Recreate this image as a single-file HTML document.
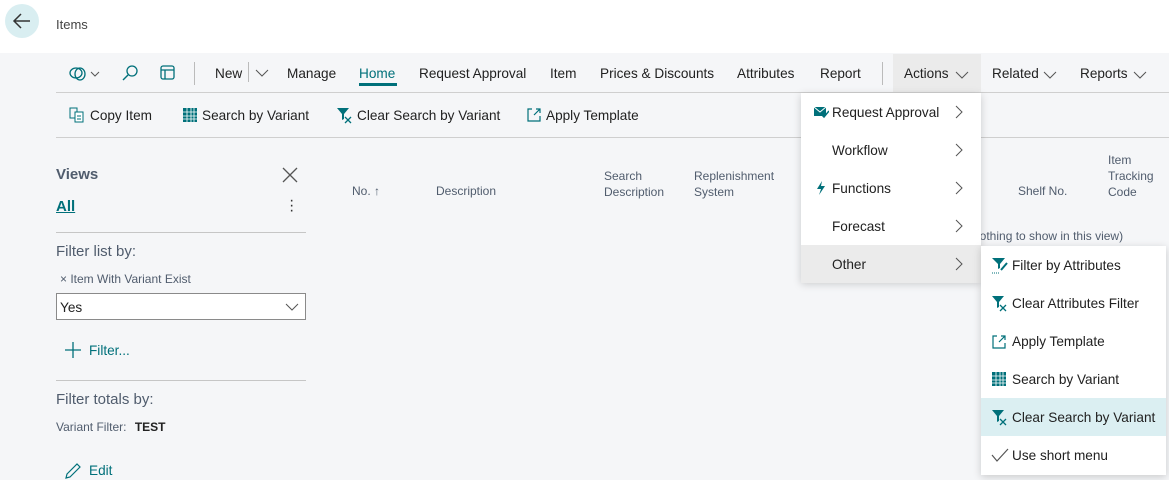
<!DOCTYPE html>
<html><head><meta charset="utf-8"><style>
*{box-sizing:border-box;margin:0;padding:0}
body{width:1169px;height:479px;overflow:hidden;background:#f5f6f8;font-family:"Liberation Sans",sans-serif;color:#212121;position:relative}
.a{position:absolute;white-space:nowrap}
.t{font-size:13.6px}
.teal{color:#00707a}
.menu{position:absolute;background:#fff;box-shadow:0 2px 8px rgba(0,0,0,.18)}
.mi{height:38px;display:flex;align-items:center;font-size:13.6px;position:relative}
.chev{position:absolute;right:18px;top:12px}
svg{display:block}
</style></head><body>
<div class="a" style="left:0;top:0;width:1169px;height:53px;background:#fff"></div>
<div class="a" style="left:5px;top:4px;width:34px;height:34px;border-radius:50%;background:#d9eef1"></div>
<svg class="a" style="left:12px;top:12px" width="20" height="18"><path d="M18 9H2M9 2L2 9l7 7" stroke="#333" stroke-width="1.5" fill="none"/></svg>
<div class="a" style="left:56px;top:17px;font-size:13px;color:#444">Items</div>

<svg class="a" style="left:68px;top:65px" width="34" height="18"><ellipse cx="8" cy="8" rx="6" ry="5" stroke="#00707a" fill="none" stroke-width="1.3"/><ellipse cx="12" cy="9" rx="5" ry="6" stroke="#00707a" fill="none" stroke-width="1.3"/><path d="M23 7l4 4 4-4" stroke="#555" fill="none"/></svg>
<svg class="a" style="left:121px;top:64px" width="18" height="18"><circle cx="11" cy="7" r="5" stroke="#00707a" fill="none" stroke-width="1.3"/><path d="M7 11L2 16" stroke="#00707a" stroke-width="1.4"/></svg>
<svg class="a" style="left:159px;top:64px" width="18" height="18"><rect x="2" y="2" width="13" height="13" rx="2" stroke="#00707a" fill="none" stroke-width="1.3"/><path d="M2 6h13M6 6v9" stroke="#00707a" stroke-width="1.3"/></svg>
<div class="a" style="left:194px;top:62px;width:1px;height:23px;background:#bbb"></div>
<div class="a t" style="left:215px;top:66px">New</div>
<div class="a" style="left:248px;top:62px;width:1px;height:20px;background:#bbb"></div>
<svg class="a" style="left:255px;top:68px" width="14" height="10"><path d="M1 2l6 6 6-6" stroke="#555" fill="none"/></svg>
<div class="a t" style="left:287px;top:66px">Manage</div>
<div class="a t teal" style="left:359px;top:66px">Home</div>
<div class="a" style="left:359px;top:83px;width:38px;height:3px;background:#00707a"></div>
<div class="a t" style="left:419px;top:66px">Request Approval</div>
<div class="a t" style="left:550px;top:66px">Item</div>
<div class="a t" style="left:600px;top:66px">Prices &amp; Discounts</div>
<div class="a t" style="left:737px;top:66px">Attributes</div>
<div class="a t" style="left:820px;top:66px">Report</div>
<div class="a" style="left:882px;top:62px;width:1px;height:23px;background:#bbb"></div>
<div class="a" style="left:893px;top:54px;width:88px;height:39px;background:#ebebeb"></div>
<div class="a t" style="left:904px;top:66px">Actions</div>
<svg class="a" style="left:955px;top:70px" width="14" height="10"><path d="M1 2l6 6 6-6" stroke="#555" fill="none"/></svg>
<div class="a t" style="left:992px;top:66px">Related</div>
<svg class="a" style="left:1043px;top:70px" width="14" height="10"><path d="M1 2l6 6 6-6" stroke="#555" fill="none"/></svg>
<div class="a t" style="left:1080px;top:66px">Reports</div>
<svg class="a" style="left:1133px;top:70px" width="14" height="10"><path d="M1 2l6 6 6-6" stroke="#555" fill="none"/></svg>
<div class="a" style="left:56px;top:92px;width:1113px;height:1px;background:#cfcfcf"></div>

<svg class="a" style="left:69px;top:107px" width="16" height="16"><rect x="1" y="1" width="7" height="10" stroke="#00707a" fill="none"/><rect x="6" y="5" width="8" height="10" stroke="#00707a" fill="#fff"/><path d="M8 9h4M8 12h4" stroke="#00707a"/></svg>
<div class="a t" style="left:90px;top:108px">Copy Item</div>
<svg class="a" style="left:182px;top:107px" width="17" height="16"><rect x="1" y="1" width="14" height="14" fill="#00707a"/><path d="M1 5h14M1 9h14M1 12h14M5 1v14M9 1v14M12 1v14" stroke="#fff" stroke-width=".8"/></svg>
<div class="a t" style="left:202px;top:108px">Search by Variant</div>
<svg class="a" style="left:336px;top:107px" width="17" height="17"><path d="M1 1h12L8 7v5L6 13V7z" fill="#00707a"/><path d="M9 10l6 6M15 10l-6 6" stroke="#00707a" stroke-width="1.3"/></svg>
<div class="a t" style="left:357px;top:108px">Clear Search by Variant</div>
<svg class="a" style="left:526px;top:106px" width="17" height="17"><path d="M6 3H2v12h12v-5" stroke="#00707a" fill="none" stroke-width="1.2"/><path d="M8 9l6-6M10 3h4v4" stroke="#00707a" fill="none" stroke-width="1.2"/></svg>
<div class="a t" style="left:546px;top:108px">Apply Template</div>
<div class="a" style="left:56px;top:137px;width:1113px;height:1px;background:#cfcfcf"></div>

<div class="a" style="left:56px;top:166px;font-size:15px;font-weight:bold;color:#505c6d">Views</div>
<svg class="a" style="left:281px;top:166px" width="18" height="18"><path d="M2 2l14 14M16 2L2 16" stroke="#555" stroke-width="1.3"/></svg>
<div class="a" style="left:56px;top:198px;font-size:15px;font-weight:bold;color:#00707a;text-decoration:underline">All</div>
<div class="a" style="left:289px;top:198px;font-size:16px;color:#333;line-height:5px">·<br>·<br>·</div>
<div class="a" style="left:56px;top:232px;width:250px;height:1px;background:#c6c6c6"></div>
<div class="a" style="left:56px;top:243px;font-size:15px;color:#505c6d">Filter list by:</div>
<div class="a" style="left:60px;top:272px;font-size:12px;color:#505c6d">× Item With Variant Exist</div>
<div class="a" style="left:56px;top:293px;width:250px;height:27px;background:#fff;border:1px solid #8a8a8a"></div>
<div class="a t" style="left:60px;top:300px">Yes</div>
<svg class="a" style="left:285px;top:302px" width="14" height="10"><path d="M1 2l6 6 6-6" stroke="#555" fill="none"/></svg>
<svg class="a" style="left:64px;top:341px" width="18" height="18"><path d="M9 1v16M1 9h16" stroke="#00707a" stroke-width="1.3"/></svg>
<div class="a t teal" style="left:89px;top:343px">Filter...</div>
<div class="a" style="left:56px;top:380px;width:250px;height:1px;background:#c6c6c6"></div>
<div class="a" style="left:56px;top:391px;font-size:15px;color:#505c6d">Filter totals by:</div>
<div class="a" style="left:56px;top:420px;font-size:12px;color:#505c6d">Variant Filter: <b style="color:#222;margin-left:5px">TEST</b></div>
<svg class="a" style="left:64px;top:462px" width="18" height="18"><path d="M2 16l1-4L13 2l3 3L6 15z" stroke="#00707a" fill="none" stroke-width="1.2"/></svg>
<div class="a t teal" style="left:89px;top:463px">Edit</div>

<div class="a" style="left:352px;top:184px;font-size:12px;color:#505c6d">No. ↑</div>
<div class="a" style="left:436px;top:184px;font-size:12px;color:#505c6d">Description</div>
<div class="a" style="left:604px;top:168px;font-size:12px;color:#505c6d;line-height:16px">Search<br>Description</div>
<div class="a" style="left:694px;top:168px;font-size:12px;color:#505c6d;line-height:16px">Replenishment<br>System</div>
<div class="a" style="left:1018px;top:184px;font-size:12px;color:#505c6d">Shelf No.</div>
<div class="a" style="left:1108px;top:152px;font-size:12px;color:#505c6d;line-height:16px">Item<br>Tracking<br>Code</div>
<div class="a" style="left:973px;top:229px;font-size:12px;color:#505c6d">nothing to show in this view)</div>

<div class="menu" style="left:801px;top:93px;width:180px;height:189px">
 <div class="mi"><svg style="position:absolute;left:12px" width="16" height="14"><path d="M1 2h12v9H1z" fill="#00707a"/><path d="M1 2l6 5 6-5" stroke="#fff" fill="none"/><path d="M8 9l3 3 5-6" stroke="#00707a" stroke-width="1.5" fill="none"/></svg><span style="margin-left:31px">Request Approval</span><svg class="chev" width="8" height="14"><path d="M1 1l6 6-6 6" stroke="#555" fill="none"/></svg></div>
 <div class="mi"><span style="margin-left:31px">Workflow</span><svg class="chev" width="8" height="14"><path d="M1 1l6 6-6 6" stroke="#555" fill="none"/></svg></div>
 <div class="mi"><svg style="position:absolute;left:15px" width="10" height="14"><path d="M6 0L1 8h4l-2 6 6-9H5z" fill="#00707a"/></svg><span style="margin-left:31px">Functions</span><svg class="chev" width="8" height="14"><path d="M1 1l6 6-6 6" stroke="#555" fill="none"/></svg></div>
 <div class="mi"><span style="margin-left:31px">Forecast</span><svg class="chev" width="8" height="14"><path d="M1 1l6 6-6 6" stroke="#555" fill="none"/></svg></div>
 <div class="mi" style="background:#ebebeb"><span style="margin-left:31px">Other</span><svg class="chev" width="8" height="14"><path d="M1 1l6 6-6 6" stroke="#555" fill="none"/></svg></div>
</div>

<div class="menu" style="left:981px;top:246px;width:185px;height:229px">
 <div class="mi"><svg style="position:absolute;left:10px" width="18" height="17"><path d="M1 1h13L9 7v4L7 12V7z" fill="#00707a"/><path d="M10 13l6-7" stroke="#00707a" stroke-width="2"/><path d="M1 16h8" stroke="#00707a" stroke-dasharray="1 1"/></svg><span style="margin-left:31px">Filter by Attributes</span></div>
 <div class="mi"><svg style="position:absolute;left:10px" width="18" height="17"><path d="M1 1h12L8 7v5L6 13V7z" fill="#00707a"/><path d="M9 10l6 6M15 10l-6 6" stroke="#00707a" stroke-width="1.3"/></svg><span style="margin-left:31px">Clear Attributes Filter</span></div>
 <div class="mi"><svg style="position:absolute;left:10px" width="17" height="17"><path d="M6 3H2v12h12v-5" stroke="#00707a" fill="none" stroke-width="1.2"/><path d="M8 9l6-6M10 3h4v4" stroke="#00707a" fill="none" stroke-width="1.2"/></svg><span style="margin-left:31px">Apply Template</span></div>
 <div class="mi"><svg style="position:absolute;left:10px" width="17" height="16"><rect x="1" y="1" width="14" height="14" fill="#00707a"/><path d="M1 5h14M1 9h14M1 12h14M5 1v14M9 1v14M12 1v14" stroke="#fff" stroke-width=".8"/></svg><span style="margin-left:31px">Search by Variant</span></div>
 <div class="mi" style="background:#dbeff2"><svg style="position:absolute;left:10px" width="18" height="17"><path d="M1 1h12L8 7v5L6 13V7z" fill="#00707a"/><path d="M9 10l6 6M15 10l-6 6" stroke="#00707a" stroke-width="1.3"/></svg><span style="margin-left:31px">Clear Search by Variant</span></div>
 <div class="mi"><svg style="position:absolute;left:10px" width="18" height="14"><path d="M1 7l5 6L17 1" stroke="#555" fill="none" stroke-width="1.2"/></svg><span style="margin-left:31px">Use short menu</span></div>
</div>
</body></html>
